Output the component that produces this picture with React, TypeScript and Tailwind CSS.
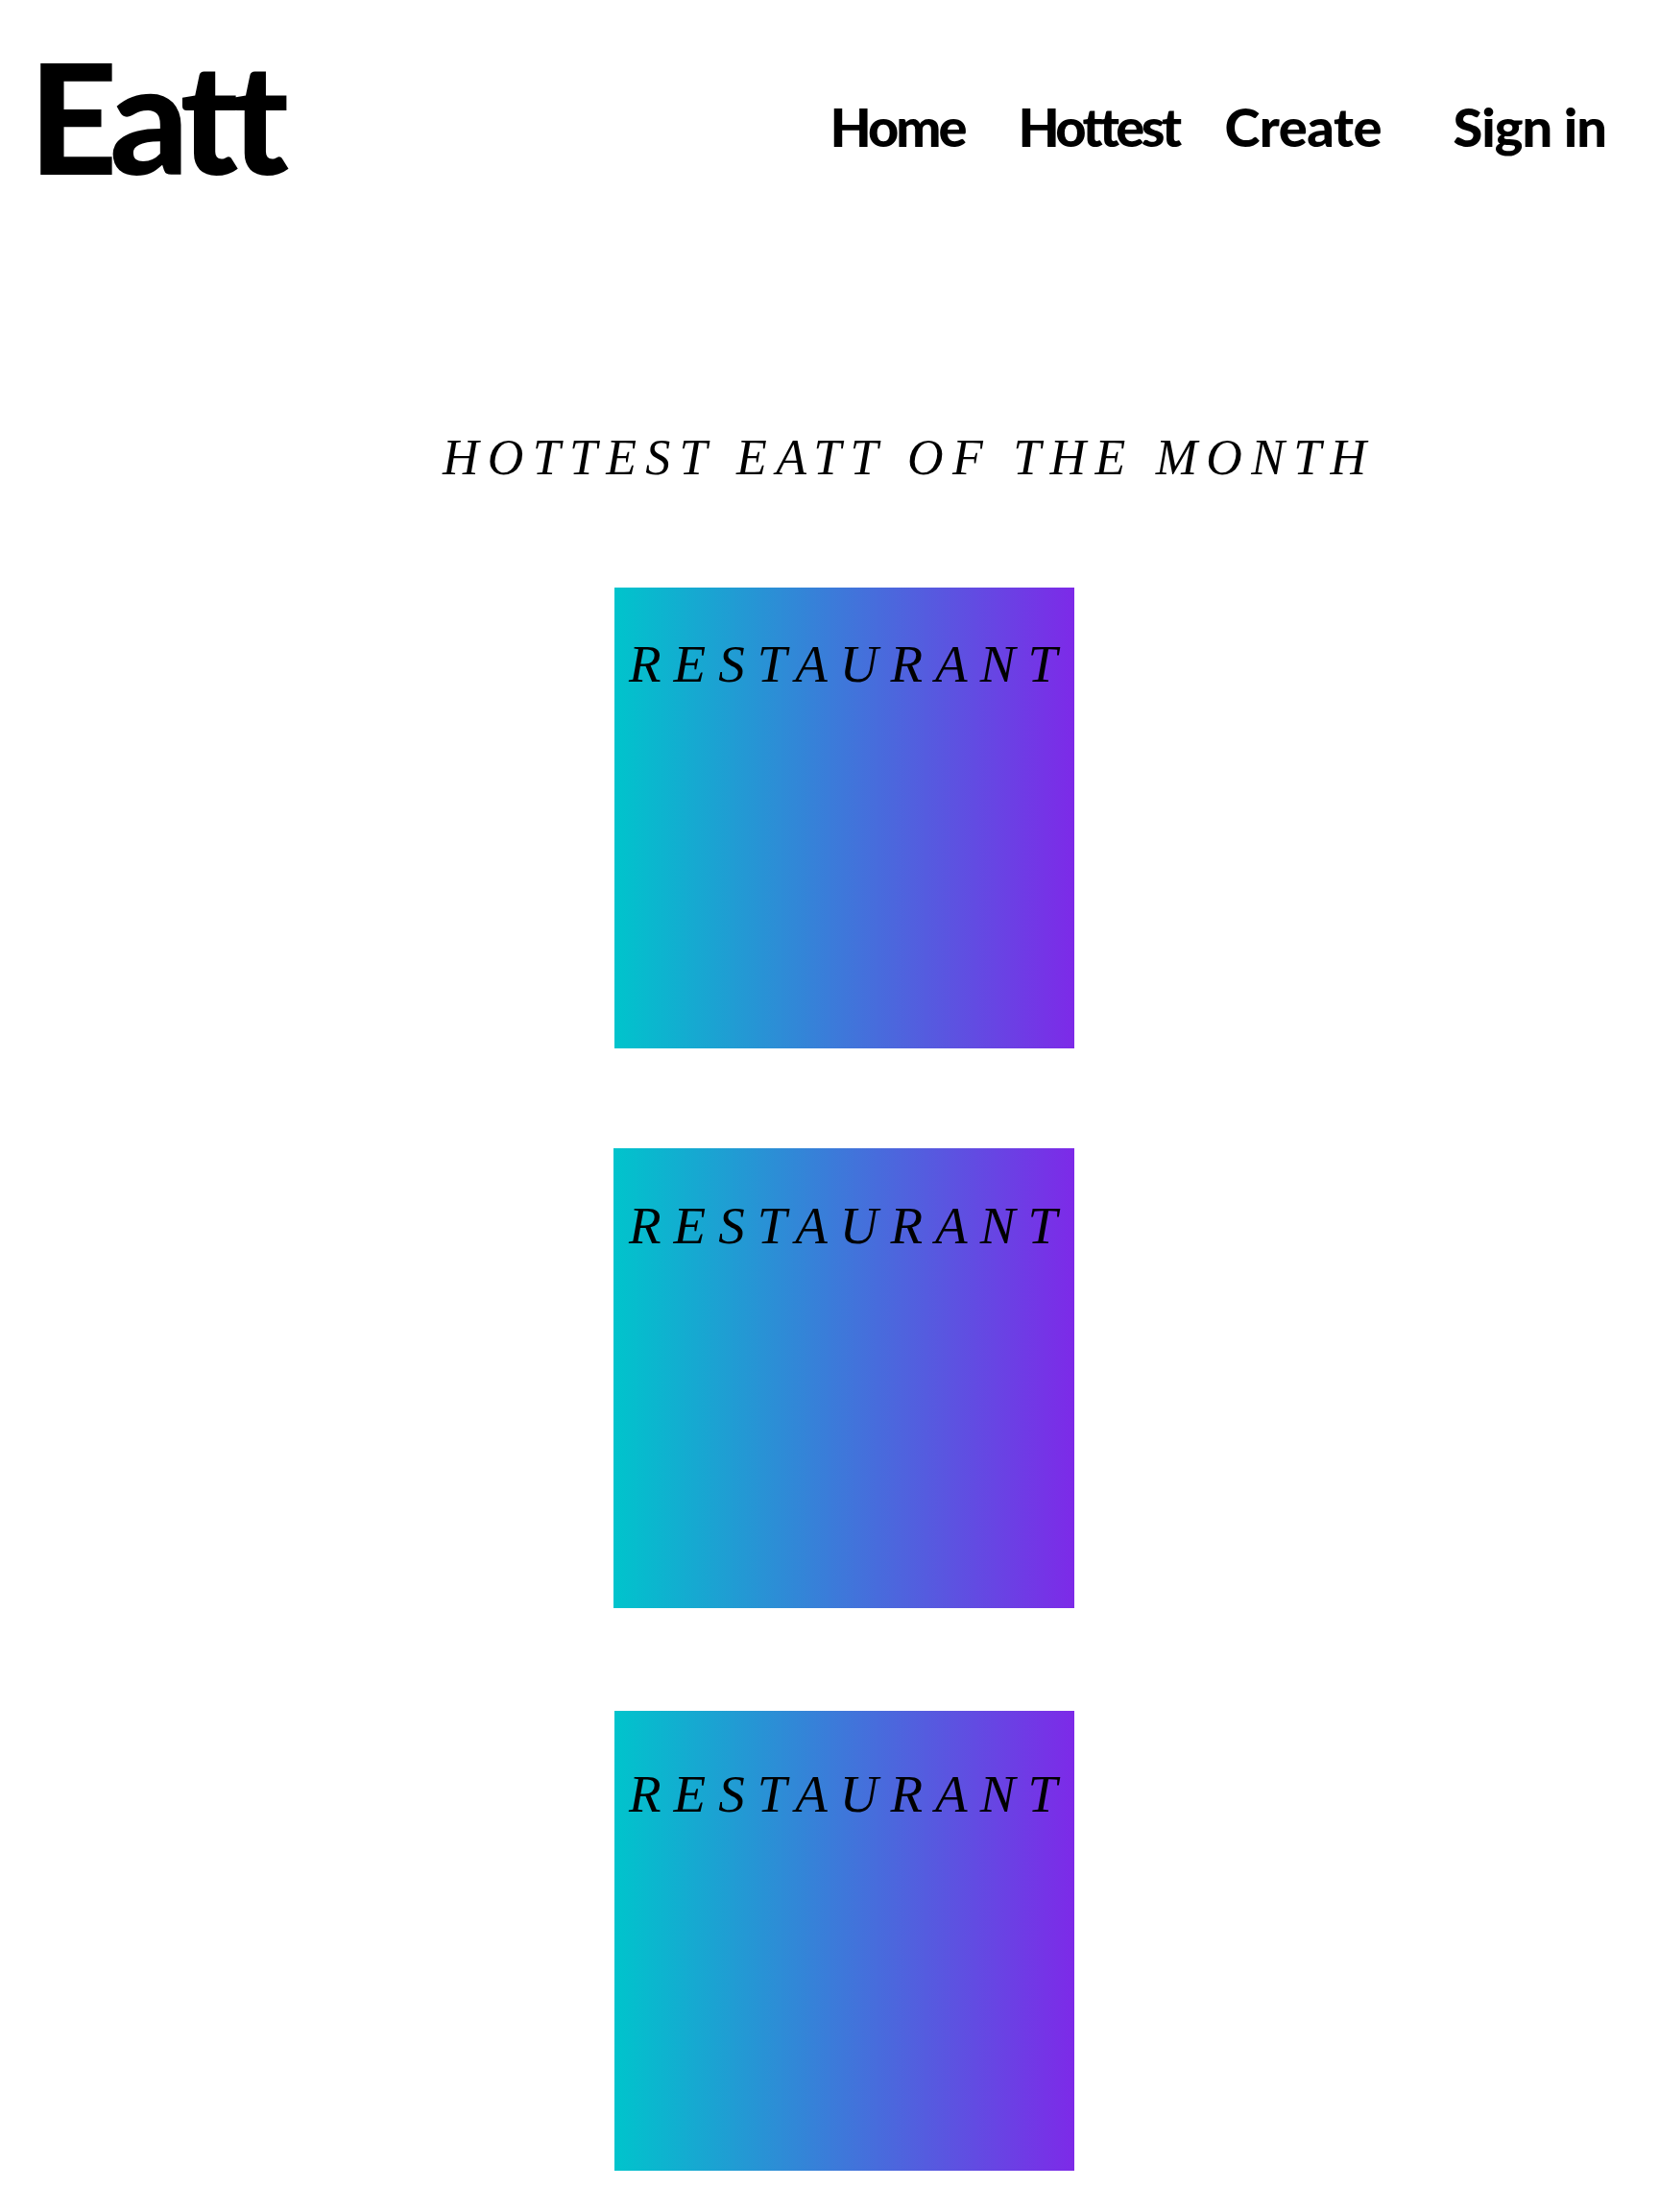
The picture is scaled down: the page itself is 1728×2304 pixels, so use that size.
const cards = [
  { id: 1, className: "ml-[640px] mt-[107px] h-[480px] w-[479px] pt-[46px] pl-[15px]" },
  { id: 2, className: "ml-[639px] mt-[104px] h-[479px] w-[480px] pt-[47px] pl-[16px]" },
  { id: 3, className: "ml-[640px] mt-[107px] h-[479px] w-[479px] pt-[53px] pl-[15px]" },
]

const links = [
  { label: "Home", className: "w-[196px] tracking-[-3px]" },
  { label: "Hottest", className: "w-[215px] tracking-[-3.6px]" },
  { label: "Create", className: "w-[238px] tracking-[-0.5px]" },
  { label: "Sign in", className: "tracking-[-1px]" },
]

function RestaurantCard({ className }: { className: string }) {
  return (
    <div className={`bg-[linear-gradient(to_right,#00c4cc,#7d2ae8)] ${className}`}>
      <p className="font-['Liberation_Serif',serif] text-[55px] italic leading-[68px] tracking-[13px] text-black">
        RESTAURANT
      </p>
    </div>
  )
}

export default function App() {
  return (
    <div className="min-h-[2304px] bg-white text-black">
      <header className="flex h-[200px] items-start">
        <h1 className="ml-[30px] mt-[35px] font-['Lato',sans-serif] text-[161px] font-black leading-[170px] tracking-[-8px]">
          Eatt
        </h1>
        <nav className="ml-auto mr-[55px] mt-[97px] flex font-['Lato',sans-serif] text-[56px] font-black leading-[70px]">
          {links.map((link) => (
            <a key={link.label} className={link.className}>
              {link.label}
            </a>
          ))}
        </nav>
      </header>
      <main>
        <h2 className="ml-[461px] mt-[248px] font-['Liberation_Serif',serif] text-[52px] italic leading-[57px] tracking-[9.3px]">
          HOTTEST EATT OF THE MONTH
        </h2>
        {cards.map((card) => (
          <RestaurantCard key={card.id} className={card.className} />
        ))}
      </main>
    </div>
  )
}
